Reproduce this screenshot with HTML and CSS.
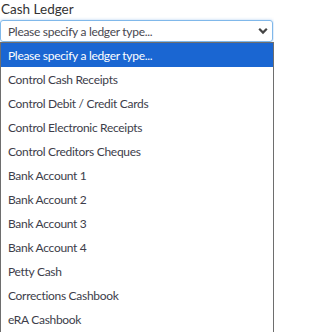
FILE: index.html
```html
<!DOCTYPE html>
<html>
<head>
<meta charset="utf-8">
<link rel="stylesheet" href="styles.css">
</head>
<body>
<div class="field">
  <div class="label">Cash Ledger</div>
  <div class="select">
    <span class="value">Please specify a ledger type...</span>
    <svg class="chev" width="10" height="8" viewBox="0 0 10 8"><path d="M1.2 1.8 L5 5.6 L8.8 1.8" fill="none" stroke="#444" stroke-width="2.2"/></svg>
  </div>
  <ul class="list">
    <li class="opt sel">Please specify a ledger type...</li>
    <li class="opt">Control Cash Receipts</li>
    <li class="opt">Control Debit / Credit Cards</li>
    <li class="opt">Control Electronic Receipts</li>
    <li class="opt">Control Creditors Cheques</li>
    <li class="opt">Bank Account 1</li>
    <li class="opt">Bank Account 2</li>
    <li class="opt">Bank Account 3</li>
    <li class="opt">Bank Account 4</li>
    <li class="opt">Petty Cash</li>
    <li class="opt">Corrections Cashbook</li>
    <li class="opt">eRA Cashbook</li>
  </ul>
</div>
</body>
</html>
```

FILE: styles.css
```css
html, body { margin: 0; padding: 0; background: #fff; }
body { width: 274px; height: 332px; overflow: hidden; }
.field { display: flex; flex-direction: column; }
.label {
  font-family: Lato, "Liberation Sans", sans-serif;
  font-size: 13.5px;
  color: #333;
  height: 20px;
  line-height: 19px;
  padding-left: 1px;
}
.select {
  box-sizing: border-box;
  height: 22px;
  width: 273px;
  border: 1px solid #80b8ea;
  border-radius: 3px;
  box-shadow: 0 0 3px rgba(100,160,230,0.5);
  display: flex;
  align-items: center;
  justify-content: space-between;
  padding: 0 4px 0 7px;
  font-family: Lato, "Open Sans", sans-serif;
  font-size: 12px;
  letter-spacing: -0.3px;
  color: #48484f;
}
.list {
  list-style: none;
  margin: 0;
  padding: 0;
  box-sizing: border-box;
  width: 274px;
  height: 291px;
  border: 1px solid #6e6e6e;
  display: flex;
  flex-direction: column;
}
.opt {
  flex: 1;
  display: flex;
  align-items: center;
  padding-left: 7px;
  font-family: Lato, "Open Sans", sans-serif;
  font-size: 12px;
  letter-spacing: -0.3px;
  color: #3d3d4a;
}
.opt.sel { background: #1a66d2; color: #fff; }
```
